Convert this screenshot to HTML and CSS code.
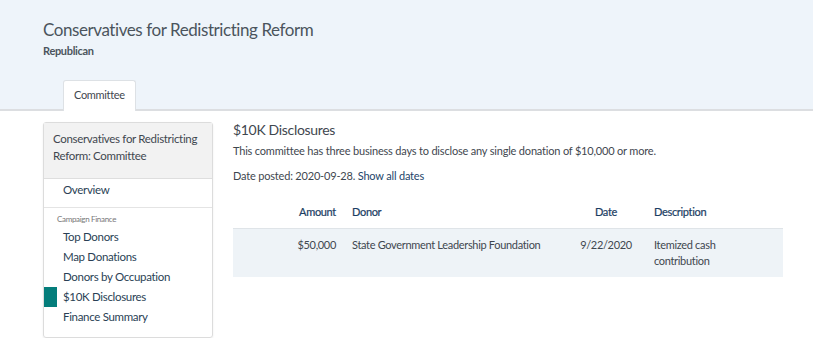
FILE: index.html
```html
<!DOCTYPE html>
<html>
<head>
<meta charset="utf-8">
<link rel="stylesheet" href="styles.css">
</head>
<body>
<header class="hero">
  <h1 class="hero-title">Conservatives for Redistricting Reform</h1>
  <div class="hero-party">Republican</div>
  <nav class="tabs">
    <a class="tab active">Committee</a>
  </nav>
</header>
<div class="page">
  <aside class="sidebar">
    <div class="side-head">Conservatives for Redistricting Reform: Committee</div>
    <div class="side-section first">
      <a class="side-link">Overview</a>
    </div>
    <div class="side-section last">
      <div class="side-label">Campaign Finance</div>
      <a class="side-link">Top Donors</a>
      <a class="side-link">Map Donations</a>
      <a class="side-link">Donors by Occupation</a>
      <a class="side-link active">$10K Disclosures</a>
      <a class="side-link">Finance Summary</a>
    </div>
  </aside>
  <main class="content">
    <h2 class="content-title">$10K Disclosures</h2>
    <p class="desc">This committee has three business days to disclose any single donation of $10,000 or more.</p>
    <p class="desc posted">Date posted: 2020-09-28. <a class="link">Show all dates</a></p>
    <table class="grid">
      <thead>
        <tr>
          <th class="c-amt">Amount</th>
          <th class="c-donor">Donor</th>
          <th class="c-date">Date</th>
          <th class="c-desc">Description</th>
        </tr>
      </thead>
      <tbody>
        <tr>
          <td class="c-amt">$50,000</td>
          <td class="c-donor">State Government Leadership Foundation</td>
          <td class="c-date">9/22/2020</td>
          <td class="c-desc">Itemized cash contribution</td>
        </tr>
      </tbody>
    </table>
  </main>
</div>
</body>
</html>
```
FILE: styles.css
```css
* { box-sizing: border-box; }
body {
  margin: 0;
  font-family: Lato, "Open Sans", sans-serif;
  letter-spacing: -0.02em;
  color: #3f474f;
  background: #fff;
}
a { text-decoration: none; cursor: pointer; }
.hero {
  background: #eef4fa;
  padding: 20px 0 0 43px;
  border-bottom: 2px solid #dcdee1;
  height: 111px;
}
.hero-title {
  margin: 0;
  font-size: 17px;
  font-weight: 400;
  line-height: 20px;
  color: #4b545d;
  letter-spacing: -0.025em;
}
.hero-party {
  margin-top: 4px;
  font-size: 11px;
  font-weight: 700;
  line-height: 14px;
  color: #4b545d;
}
.tabs {
  display: flex;
  margin-top: 22px;
  padding-left: 20px;
}
.tab {
  display: block;
  height: 31px;
  padding: 6px 10px 0;
  background: #fff;
  border: 1px solid #dde1e5;
  border-bottom: none;
  border-radius: 3px 3px 0 0;
  font-size: 11px;
  color: #3f474f;
  line-height: 15px;
}
.page {
  display: flex;
  padding: 11px 30px 0 43px;
  gap: 20px;
}
.sidebar {
  width: 170px;
  flex: none;
  border: 1px solid #dcdcdc;
  border-radius: 3px;
  box-shadow: 0 1px 2px rgba(0,0,0,0.08);
  height: 216px;
}
.side-head {
  background: #f2f2f2;
  border-bottom: 1px solid #dedede;
  padding: 7px 6px 7px 9px;
  height: 56px;
  font-size: 11.5px;
  line-height: 17px;
  color: #3f474f;
}
.side-section {
  border-bottom: 1px solid #e4e4e4;
}
.side-section.first { padding: 0 0 6px; }
.side-section.first .side-link { line-height: 22px; height: 22px; }
.side-section.last { border-bottom: none; padding-top: 5px; }
.side-label {
  font-size: 8px;
  color: #777;
  padding-left: 13px;
  line-height: 12px;
  margin-bottom: 2px;
}
.side-link {
  display: block;
  position: relative;
  padding-left: 19px;
  font-size: 11.5px;
  line-height: 20px;
  height: 20px;
  color: #2a3f55;
}
.side-link.active::before {
  content: "";
  position: absolute;
  left: 0;
  top: 0;
  width: 13px;
  height: 20px;
  background: #047d7b;
}
.content { flex: 1; }
.content-title {
  margin: 0;
  font-size: 14px;
  font-weight: 400;
  line-height: 16px;
  color: #3f474f;
}
.desc {
  margin: 5px 0 0;
  font-size: 11px;
  line-height: 15px;
  color: #3f474f;
  letter-spacing: -0.017em;
}
.desc.posted { margin-top: 10px; }
.link { color: #24456a; }
.grid {
  width: 100%;
  margin-top: 13px;
  border-collapse: collapse;
  table-layout: fixed;
  font-size: 11px;
}
.grid th {
  font-weight: 400;
  color: #1b3d63;
  -webkit-text-stroke: 0.2px #1b3d63;
  padding: 8px;
  line-height: 16px;
  text-align: left;
  border-bottom: 1px solid #dfe4e8;
}
.grid td {
  padding: 8px;
  line-height: 16px;
  vertical-align: top;
  background: #eef3f7;
  color: #3f474f;
}
.grid .c-amt { width: 111px; text-align: right; }
.grid .c-donor { width: 222px; }
.grid .c-date { width: 80px; text-align: center; }
.grid .c-desc { width: 137px; padding-right: 40px; }
```
